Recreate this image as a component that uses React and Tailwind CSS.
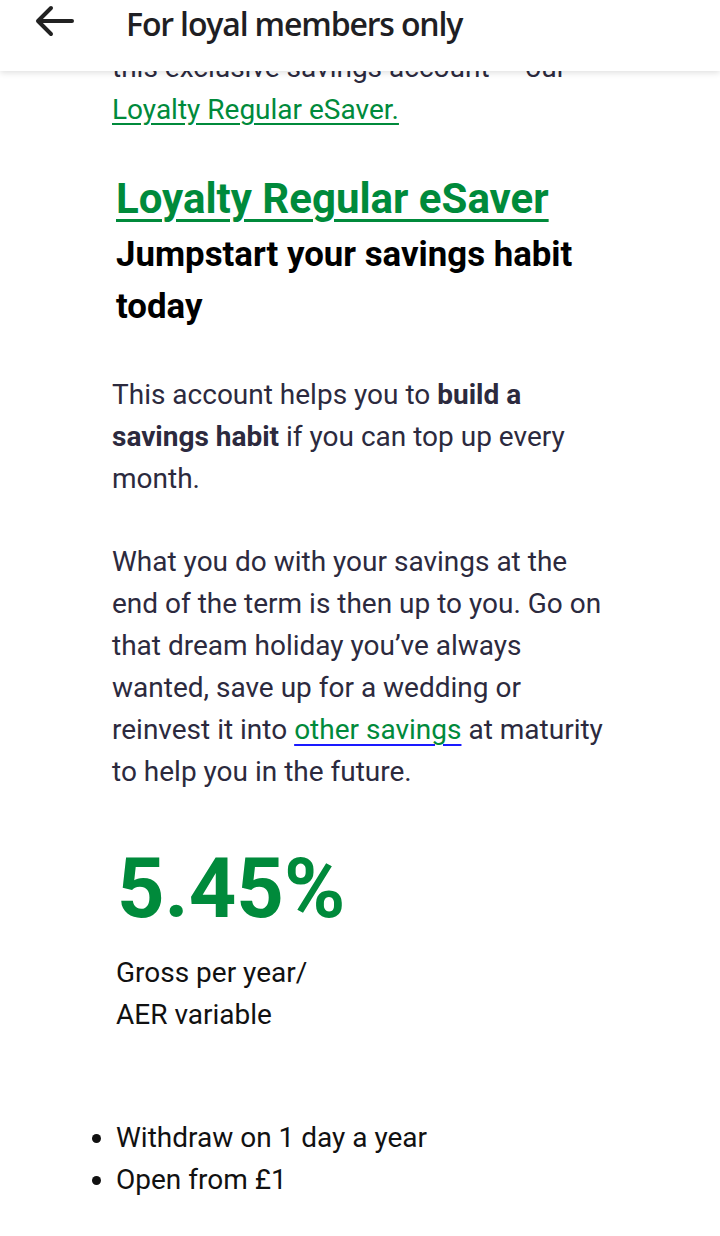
export default function App() {
  return (
    <div
      className="relative h-[1236px] w-[720px] overflow-hidden bg-white"
      style={{ fontFamily: 'Roboto, "Liberation Sans", sans-serif' }}
    >
      {/* Top bar, sits over the scrolled content */}
      <header className="absolute inset-x-0 top-0 z-10 flex h-[71px] items-start bg-white shadow-[0_2px_6px_rgba(0,0,0,0.12)]">
        <button className="ml-[34px] mt-[4px] text-[#222]">
          <svg width="42" height="34" viewBox="0 0 42 34" fill="none" stroke="currentColor" strokeWidth="4" strokeLinecap="round" strokeLinejoin="round">
            <path d="M38 17H5" />
            <path d="M17 4 4 17l13 13" />
          </svg>
        </button>
        <h1
          className="ml-[50px] mt-[8px] text-[32px] font-semibold leading-none tracking-[-1.15px] text-[#1f1f24]"
          style={{ fontFamily: '"Open Sans", sans-serif' }}
        >
          For loyal members only
        </h1>
      </header>

      <main className="w-[608px] pl-[112px] pt-[47px] text-[28px] leading-[42px] text-[#2c2a3e]">
        <p>
          this exclusive savings account — our{' '}
          <a href="#" className="text-[#008a3b] underline decoration-[#008a3b] underline-offset-[4px]">
            Loyalty Regular eSaver.
          </a>
        </p>

        <h2 className="mt-[43px] pl-[4px] text-[42px] font-bold leading-[50px] text-[#008a3b]">
          <a href="#" className="underline decoration-[3px] underline-offset-[6px]">Loyalty Regular eSaver</a>
        </h2>
        <h3 className="mt-[4px] pl-[4px] text-[34.8px] font-bold leading-[52px] text-black">
          Jumpstart your savings habit today
        </h3>

        <p className="mt-[42px]">
          This account helps you to <strong className="font-bold">build a savings habit</strong> if you can top up every month.
        </p>
        <p className="mt-[41px]">
          What you do with your savings at the end of the term is then up to you. Go on that dream holiday you’ve always wanted, save up for a wedding or reinvest it into{' '}
          <a href="#" className="text-[#008a3b] underline decoration-[#1a1aff] decoration-2 underline-offset-[5px]">other savings</a>{' '}
          at maturity to help you in the future.
        </p>

        <div className="mt-[46px] pl-[5px] text-[83px] font-bold leading-[100px] text-[#008a3b]">5.45%</div>
        <p className="mt-[13px] pl-[4px] text-[#111]">
          Gross per year/
          <br />
          AER variable
        </p>

        <ul className="mt-[81px] list-disc pl-[4px] text-[#111]">
          <li>Withdraw on 1 day a year</li>
          <li>Open from £1</li>
        </ul>
      </main>
    </div>
  )
}
